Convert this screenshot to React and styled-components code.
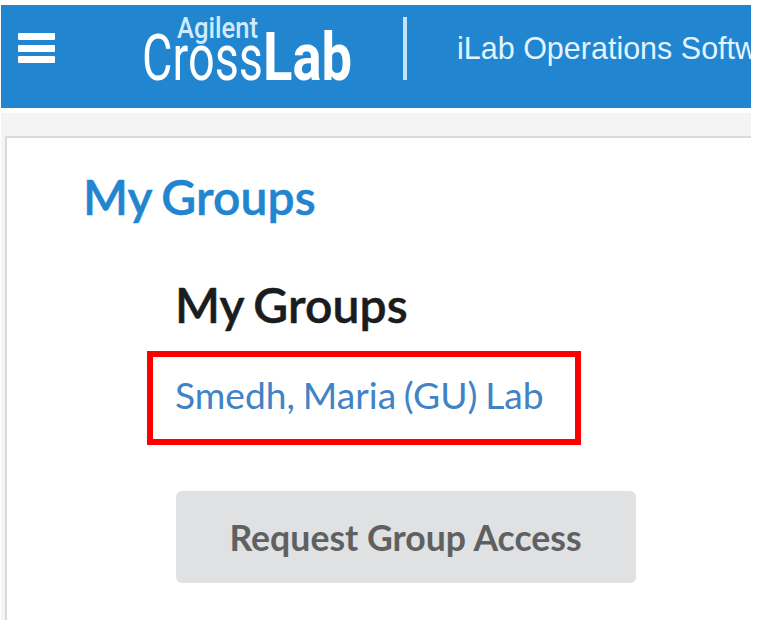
import React from "react";
import styled, { createGlobalStyle } from "styled-components";

const GlobalStyle = createGlobalStyle`
  * { box-sizing: border-box; }
  body { margin: 0; background: #fff; }
`;

const Page = styled.div`
  width: 761px;
  height: 643px;
  padding: 5px 10px 23px 1px;
  display: flex;
  flex-direction: column;
  overflow: hidden;
  background: #fff;
  font-family: Lato, sans-serif;
`;

const Header = styled.header`
  flex: none;
  height: 103px;
  display: flex;
  align-items: flex-start;
  overflow: hidden;
  background: #2185d0;
`;

const MenuButton = styled.button`
  flex: none;
  margin: 28px 0 0 17px;
  padding: 0;
  width: 37px;
  height: 30px;
  border: 0;
  background: none;
  display: flex;
  flex-direction: column;
  justify-content: space-between;
  align-items: stretch;
`;

const MenuBar = styled.span`
  height: 7px;
  border-radius: 1px;
  background: #fff;
`;

const Logo = styled.svg`
  flex: none;
  width: 220px;
  height: 98px;
  margin-left: 85px;
  overflow: visible;
  font-family: Roboto, sans-serif;
  fill: #fff;
`;

const Divider = styled.span`
  flex: none;
  width: 4px;
  height: 63px;
  margin: 12px 0 0 43px;
  background: #c2e3fa;
`;

const ProductName = styled.span`
  margin: 25px 0 0 50px;
  font: 30.5px/36px "Liberation Sans", sans-serif;
  color: #e2f4ff;
  white-space: nowrap;
`;

const Content = styled.main`
  flex: 1;
  margin-top: 5px;
  padding: 23px 0 0 4px;
  background: #f4f4f4;
`;

const Card = styled.section`
  height: 100%;
  border: 2px solid #dadada;
  border-width: 2px 0 0 2px;
  background: #fff;
  padding: 29px 0 0 76px;
`;

const Title = styled.h1`
  margin: 0;
  font-size: 48px;
  line-height: 60px;
  font-weight: 600;
  letter-spacing: 0.15px;
  word-spacing: -2.5px;
  -webkit-text-stroke: 0.5px currentColor;
  color: #2185d0;
  white-space: nowrap;
`;

const Section = styled.div`
  margin: 48px 0 0 64px;
  display: flex;
  flex-direction: column;
  align-items: flex-start;
`;

const Subtitle = styled(Title).attrs({ as: "h2" })`
  margin-left: 28px;
  color: #1b1c1d;
`;

const GroupFrame = styled.div`
  width: 434px;
  height: 94px;
  margin-top: 16px;
  border: 6px solid #f00;
  padding: 0 0 7px 22px;
  display: flex;
  align-items: center;
`;

const GroupLink = styled.a`
  font-size: 37.2px;
  line-height: 44px;
  word-spacing: -1.8px;
  color: #4183c4;
  white-space: nowrap;
`;

const AccessButton = styled.button`
  width: 460px;
  height: 92px;
  margin: 46px 0 0 29px;
  padding: 1px 1px 0 0;
  border: 0;
  border-radius: 6px;
  background: #dfe1e3;
  color: #5f6061;
  font: 700 35.6px/44px Lato, sans-serif;
  white-space: nowrap;
`;

export default function App() {
  return (
    <>
      <GlobalStyle />
      <Page>
        <Header>
          <MenuButton aria-label="Menu">
            <MenuBar />
            <MenuBar />
            <MenuBar />
          </MenuButton>
          <Logo viewBox="140 5 220 98">
            <text x="177" y="37.5" fontSize="29" fontWeight="500" textLength="81" lengthAdjust="spacingAndGlyphs" fill="#d0ebfd">Agilent</text>
            <text x="142" y="80" fontSize="65" fontWeight="400" textLength="121" lengthAdjust="spacingAndGlyphs">Cross</text>
            <text x="263" y="80" fontSize="66" fontWeight="700" textLength="89" lengthAdjust="spacingAndGlyphs">Lab</text>
          </Logo>
          <Divider />
          <ProductName>iLab Operations Software</ProductName>
        </Header>
        <Content>
          <Card>
            <Title>My Groups</Title>
            <Section>
              <Subtitle>My Groups</Subtitle>
              <GroupFrame>
                <GroupLink>Smedh, Maria (GU) Lab</GroupLink>
              </GroupFrame>
              <AccessButton>Request Group Access</AccessButton>
            </Section>
          </Card>
        </Content>
      </Page>
    </>
  );
}
